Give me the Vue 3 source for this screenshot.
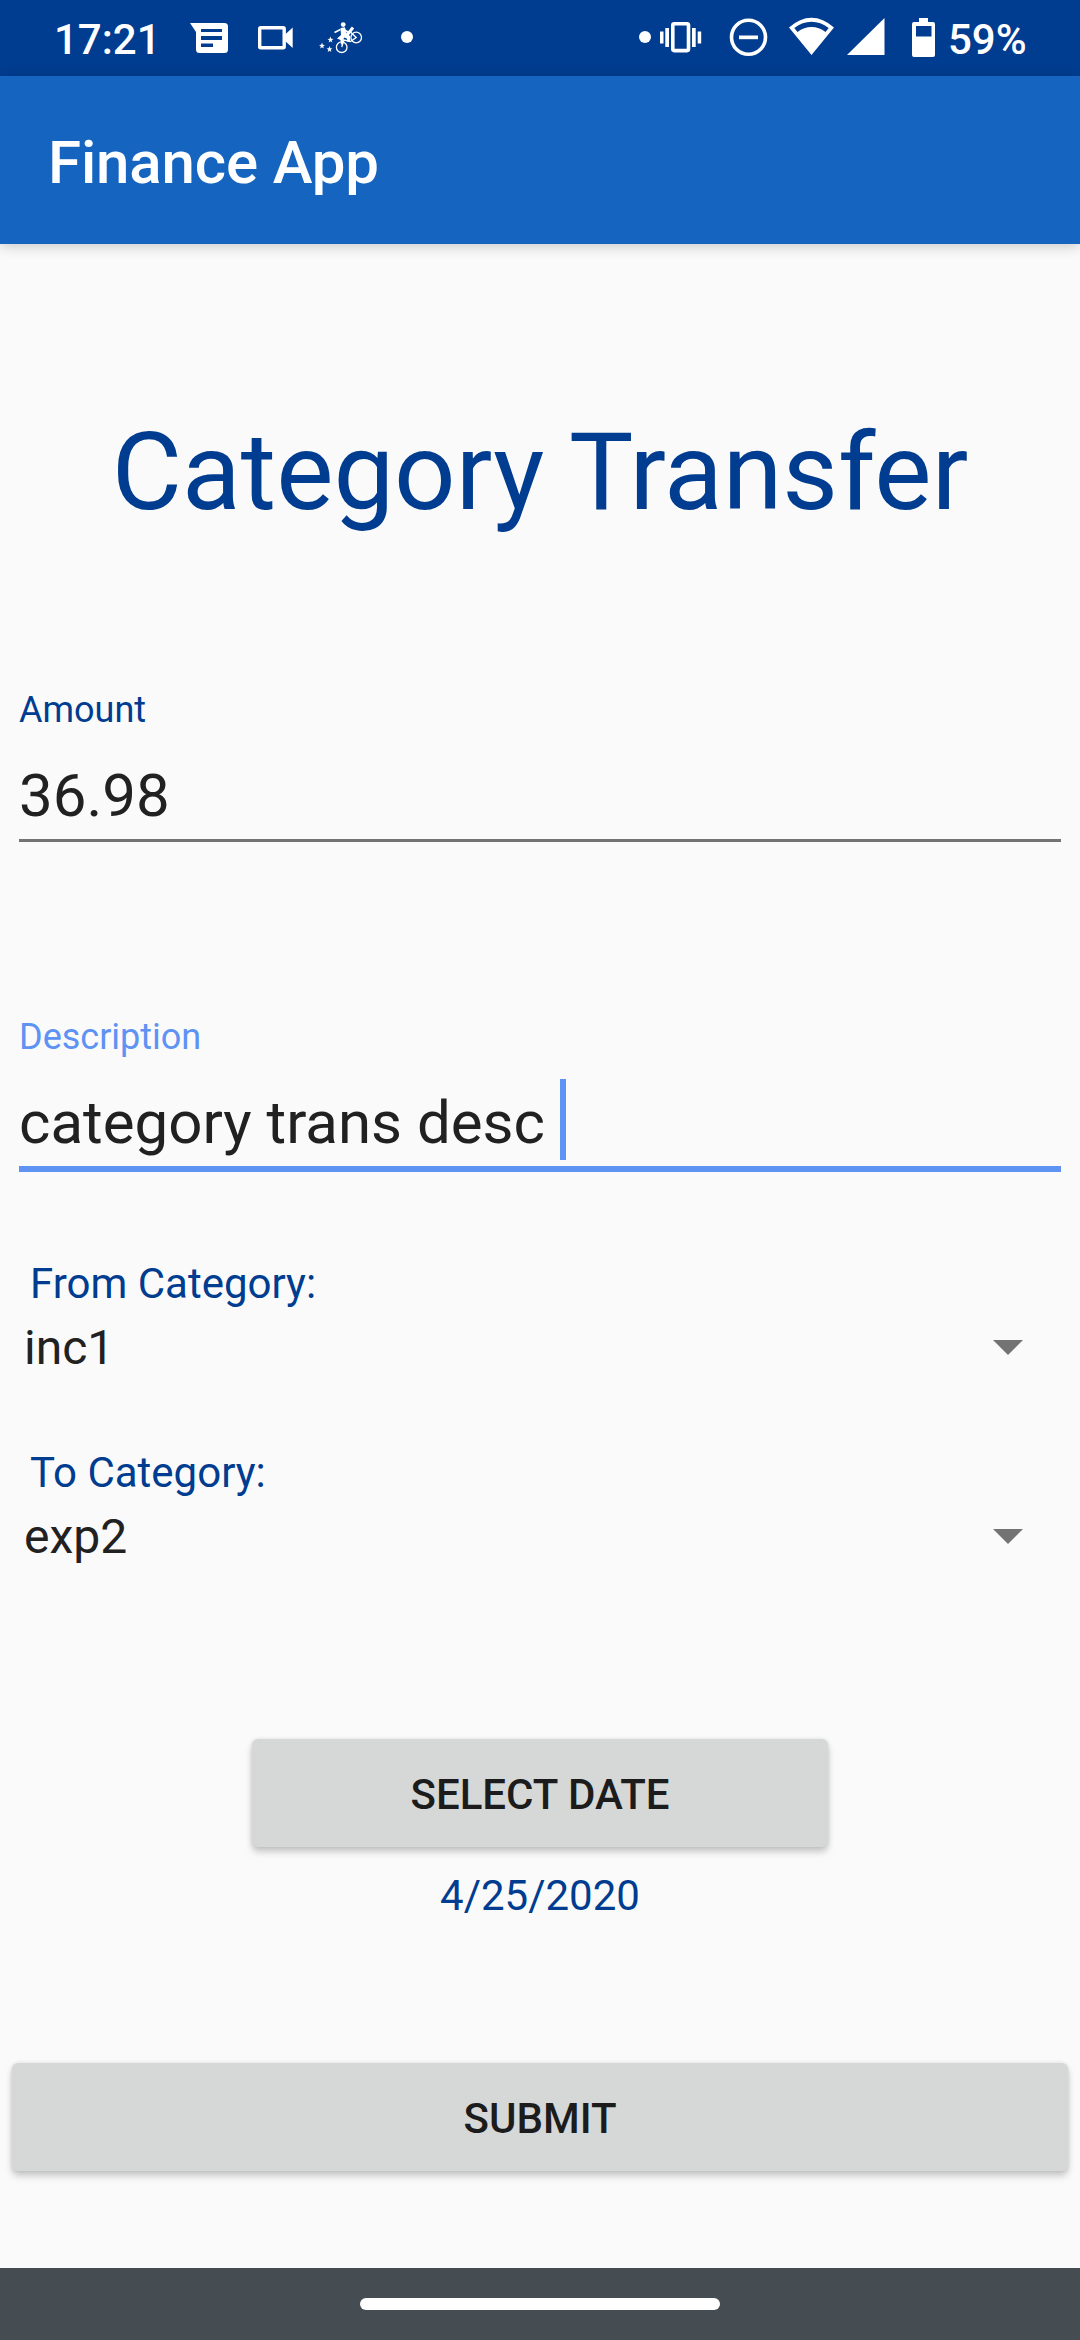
<script setup>
import { ref } from 'vue'

const amount = ref('36.98')
const description = ref('category trans desc')
const date = ref('4/25/2020')
const categories = [
  { label: 'From Category:', value: 'inc1' },
  { label: 'To Category:', value: 'exp2' },
]
</script>

<template>
  <div class="screen">
    <header class="status">
      <span class="clock">17:21</span>
      <svg class="icon" width="60" height="76" viewBox="184 0 60 76">
        <path fill="#fff" fill-rule="evenodd" d="M190 23H224.500Q228 23 228 26.500V49.500Q228 53 224.500 53H199.500Q196 53 196 49.500V32ZM201 29V32H222V29ZM201 36V40H222V36ZM201 43.500V47H213V43.500Z" />
      </svg>
      <svg class="icon" width="68" height="76" viewBox="244 0 68 76">
        <rect x="259.700" y="27.700" width="24.500" height="20" rx="1" fill="none" stroke="#fff" stroke-width="3.400" />
        <path fill="#fff" d="M284 35.500L292.700 27.500V48L284 40Z" />
      </svg>
      <svg class="icon" width="68" height="76" viewBox="312 0 68 76">
        <g fill="none" stroke="#fff">
          <circle cx="341.700" cy="47.200" r="5.300" stroke-width="1.300" />
          <circle cx="356.200" cy="37.500" r="5.300" stroke-width="1.300" />
          <path stroke-width="1.300" d="M341.700 47L344 40L350.500 41.500L356.200 37.500L350 31.500" />
          <path stroke-width="3" d="M347.500 34.500L353 27.500" />
          <path stroke-width="1.800" d="M344.500 30L349 32.500M340.500 29.500L334.500 32.500" />
        </g>
        <circle cx="343.200" cy="24.600" r="2.400" fill="#fff" />
        <path fill="#fff" d="M340.500 28L345 27.300L346.500 33L350 36L350 41.500L347.500 42L346.800 38.500L344 37.500L343 43L341 45L340.500 40L337 38.500L341 35Z" />
        <g fill="#fff">
          <path d="M322 42.500L322.800 44.700L325 44.900L323.200 46.200L323.800 48.400L322 47.200L320.200 48.400L320.800 46.200L319 44.900L321.200 44.700Z" />
          <path d="M330.500 36.500L331.300 38.700L333.500 38.900L331.700 40.200L332.300 42.400L330.500 41.200L328.700 42.400L329.300 40.200L327.500 38.900L329.700 38.700Z" />
          <path d="M329.500 46L330.300 48.200L332.500 48.400L330.700 49.700L331.300 51.900L329.500 50.700L327.700 51.900L328.300 49.700L326.500 48.400L328.700 48.200Z" />
        </g>
      </svg>
      <svg class="icon" width="54" height="76" viewBox="380 0 54 76">
        <circle cx="407" cy="37" r="6" fill="#fff" />
      </svg>
      <span class="spacer"></span>
      <svg class="icon" width="84" height="76" viewBox="636 0 84 76">
        <circle cx="645" cy="37" r="6" fill="#fff" />
        <rect x="672.800" y="23.800" width="15.700" height="26.800" rx="1.500" fill="none" stroke="#fff" stroke-width="3.600" />
        <path fill="#fff" d="M660 31.500H663.500V43.500H660ZM665.300 28H669V47H665.300ZM692 28H695.700V47H692ZM697.700 31.500H701.200V43.500H697.700Z" />
      </svg>
      <svg class="icon" width="62" height="76" viewBox="720 0 62 76">
        <circle cx="748.500" cy="37.300" r="17" fill="none" stroke="#fff" stroke-width="3.600" />
        <path fill="#fff" d="M739 35.500H758V39.200H739Z" />
      </svg>
      <svg class="icon" width="58" height="76" viewBox="782 0 58 76">
        <path fill="#fff" fill-rule="evenodd" d="M789 27.500Q800 17.700 811.500 17.700Q823 17.700 834 27.500L811.500 55ZM794.300 28L797.500 32Q804 27 811.500 27Q819 27 825.500 32L828.700 28Q820.500 21.700 811.500 21.700Q802.500 21.700 794.300 28Z" />
      </svg>
      <svg class="icon" width="60" height="76" viewBox="840 0 60 76">
        <path fill="#fff" d="M884.500 18V55H847Z" />
      </svg>
      <svg class="icon" width="48" height="76" viewBox="900 0 48 76">
        <path fill="#fff" fill-rule="evenodd" d="M919 18H928V22H933Q935 22 935 24V55Q935 57 933 57H914Q912 57 912 55V24Q912 22 914 22H919ZM916 26V36.500H931.500V26Z" />
      </svg>
      <span class="battery">59%</span>
    </header>

    <div class="appbar">Finance App</div>

    <main class="content">
      <h1 class="title">Category Transfer</h1>

      <div class="field">
        <label class="field-label">Amount</label>
        <div class="field-value">{{ amount }}</div>
      </div>

      <div class="field focused">
        <label class="field-label">Description</label>
        <div class="field-value">{{ description }}<i class="caret"></i></div>
      </div>

      <div class="pickers">
        <div v-for="c in categories" :key="c.label" class="picker">
          <div class="picker-label">{{ c.label }}</div>
          <div class="picker-value">
            <span>{{ c.value }}</span>
            <svg width="30" height="15" viewBox="0 0 30 15"><path fill="#737373" d="M0 0H30L15 15Z" /></svg>
          </div>
        </div>
      </div>

      <button class="btn select">SELECT DATE</button>
      <div class="date">{{ date }}</div>
      <button class="btn submit">SUBMIT</button>
    </main>

    <footer class="nav"><span class="pill"></span></footer>
  </div>
</template>

<style>
body {
  margin: 0;
}
</style>

<style scoped>
.screen {
  width: 1080px;
  height: 2340px;
  display: flex;
  flex-direction: column;
  overflow: hidden;
  background: #fafafa;
  color: #212121;
  font-family: Roboto, sans-serif;
}
.status {
  display: flex;
  flex: none;
  height: 76px;
  box-sizing: border-box;
  padding-left: 54px;
  background: #003c8f;
  color: #fff;
  font-size: 42px;
  font-weight: 500;
  line-height: 79px;
}
.icon {
  display: block;
  flex: none;
}
.clock {
  width: 130px;
}
.spacer {
  flex: 1;
}
.battery {
  width: 132px;
}
.appbar {
  flex: none;
  height: 168px;
  padding-left: 48px;
  background: #1565c0;
  box-shadow: 0 3px 12px rgba(0, 0, 0, 0.18);
  color: #fff;
  font-size: 60px;
  font-weight: 500;
  letter-spacing: -0.15px;
  line-height: 173px;
}
.content {
  flex: 1;
  display: flex;
  flex-direction: column;
}
.title {
  margin: 165px 0 0;
  text-align: center;
  font-size: 108px;
  font-weight: 400;
  line-height: 126px;
  color: #003c8f;
}
.field {
  height: 153px;
  margin: 154px 19px 0;
  color: #212121;
}
.field.focused {
  height: 156px;
  margin-top: 174px;
}
.field-label {
  display: block;
  font-size: 36px;
  line-height: 42px;
  color: #003c8f;
}
.focused .field-label {
  color: #5e92f3;
}
.field-value {
  display: flex;
  margin-top: 29px;
  padding-bottom: 8px;
  border-bottom: 3px solid #737373;
  font-size: 60px;
  line-height: 71px;
}
.focused .field-value {
  border-bottom: 6px solid #5e92f3;
}
.caret {
  width: 6px;
  height: 81px;
  margin: -8px 0 -2px 15px;
  background: #5e92f3;
}
.pickers {
  display: flex;
  flex-direction: column;
  gap: 72px;
  margin-top: 87px;
}
.picker-label {
  padding-left: 30px;
  font-size: 42px;
  line-height: 49px;
  color: #003c8f;
}
.picker-value {
  display: flex;
  align-items: center;
  justify-content: space-between;
  margin-top: 11px;
  padding: 0 57px 0 24px;
  font-size: 48px;
  line-height: 57px;
}
.btn {
  flex: none;
  height: 108px;
  padding: 0;
  border: 0;
  border-radius: 6px;
  background: #d6d8d7;
  box-shadow: 0 5px 7px rgba(0, 0, 0, 0.2), 0 0 4px rgba(0, 0, 0, 0.1);
  color: #1c1c1c;
  font: 500 42px/49px Roboto, sans-serif;
  padding-top: 2px;
}
.select {
  width: 576px;
  margin: 174px auto 0;
}
.date {
  margin-top: 24px;
  text-align: center;
  font-size: 42px;
  line-height: 49px;
  color: #003c8f;
}
.submit {
  margin: 143px 12px 0;
}
.nav {
  flex: none;
  display: flex;
  align-items: center;
  justify-content: center;
  height: 72px;
  background: #454c52;
}
.pill {
  width: 360px;
  height: 12px;
  border-radius: 6px;
  background: #fff;
}
</style>
